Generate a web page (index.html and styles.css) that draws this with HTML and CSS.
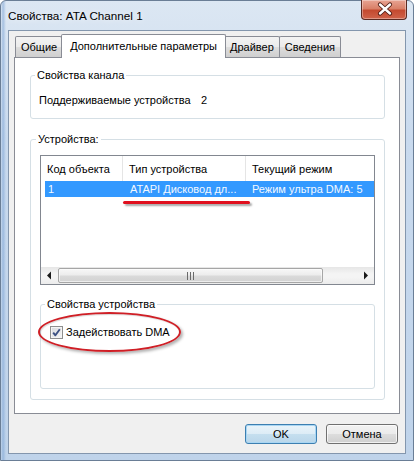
FILE: index.html
```html
<!DOCTYPE html>
<html lang="ru">
<head>
<meta charset="utf-8">
<title>Свойства: ATA Channel 1</title>
<link rel="stylesheet" href="styles.css">
</head>
<body>
<div class="window">
  <div class="titlebar">
    <span class="title">Свойства: ATA Channel 1</span>
    <div class="close">
      <svg width="46" height="20" viewBox="0 0 46 20">
        <path d="M18 5.5 L28 14.5 M28 5.5 L18 14.5" stroke="#4b1a12" stroke-width="4.2" stroke-linecap="round" fill="none"/>
        <path d="M18 5.5 L28 14.5 M28 5.5 L18 14.5" stroke="#ffffff" stroke-width="2.4" stroke-linecap="round" fill="none"/>
      </svg>
    </div>
  </div>
  <div class="client">
    <div class="tabs">
      <div class="tab first">Общие</div>
      <div class="tab active">Дополнительные параметры</div>
      <div class="tab">Драйвер</div>
      <div class="tab">Сведения</div>
    </div>
    <div class="panel">
      <fieldset class="group g1">
        <legend>Свойства канала</legend>
        <div class="prop"><span class="prop-label">Поддерживаемые устройства</span><span>2</span></div>
      </fieldset>
      <fieldset class="group g2">
        <legend>Устройства:</legend>
        <div class="list">
          <div class="lhead">
            <div class="h1">Код объекта</div>
            <div class="h2">Тип устройства</div>
            <div class="h3">Текущий режим</div>
          </div>
          <div class="lrow sel">
            <div class="r1">1</div>
            <div class="r2">ATAPI Дисковод дл...</div>
            <div class="r3">Режим ультра DMA: 5</div>
          </div>
          <div class="lbody"></div>
          <div class="hscroll">
            <div class="sbtn">
              <svg width="17" height="17" viewBox="0 0 17 17"><path d="M6 8.5 L10 4.5 L10 12.5 Z" fill="#1a1a1a"/></svg>
            </div>
            <div class="thumb">
              <svg width="7" height="8" viewBox="0 0 7 8"><path d="M0.5 0 V8 M3.5 0 V8 M6.5 0 V8" stroke="#6a6a6a" stroke-width="1"/></svg>
            </div>
            <div class="track"></div>
            <div class="sbtn">
              <svg width="17" height="17" viewBox="0 0 17 17"><path d="M11 8.5 L7 4.5 L7 12.5 Z" fill="#1a1a1a"/></svg>
            </div>
          </div>
        </div>
        <fieldset class="group g3">
          <legend>Свойства устройства</legend>
          <div class="check">
            <span class="box">
              <svg width="11" height="11" viewBox="0 0 11 11"><path d="M2.2 5.6 L4.4 8.3 L8.8 2.2" stroke="#3c5183" stroke-width="1.9" fill="none" stroke-linejoin="round"/></svg>
            </span>
            <span>Задействовать DMA</span>
          </div>
        </fieldset>
      </fieldset>
    </div>
    <div class="buttons">
      <button class="btn default">OK</button>
      <button class="btn">Отмена</button>
    </div>
  </div>
  <div class="mark underline"></div>
  <div class="mark ellipse"></div>
</div>
</body>
</html>
```
FILE: styles.css
```css
* { box-sizing: border-box; }
html, body { margin: 0; padding: 0; }
body {
  width: 414px;
  height: 461px;
  overflow: hidden;
  background: #ffffff;
  font-family: "Liberation Sans", Arial, sans-serif;
  font-size: 11px;
  line-height: 16px;
  color: #000;
  white-space: nowrap;
}

.window {
  position: relative;
  width: 414px;
  height: 461px;
  padding: 0 7px 6px;
  border: 1px solid #6a7e96;
  border-radius: 6px 6px 0 0;
  background:
    linear-gradient(to right, rgba(255,255,255,0) 0, rgba(120,160,210,.55) 2px, rgba(255,255,255,0) 5px, rgba(255,255,255,0) 100%),
    linear-gradient(#dce7f3, #c9daee 30%, #bfd3ea 100%);
}

.titlebar {
  display: flex;
  align-items: flex-start;
  height: 29px;
}
.title {
  margin-top: 7px;
  font-size: 11.7px;
  color: #000;
  text-shadow: 0 0 6px rgba(255,255,255,.9);
}
.close {
  margin-left: auto;
  margin-top: -1px;
  margin-right: -1px;
  width: 46px;
  height: 20px;
  border: 1px solid #5a2a22;
  border-top: none;
  border-radius: 0 0 4px 4px;
  background: linear-gradient(#e8a493 0, #d98068 45%, #c44a30 55%, #d0634a 100%);
  box-shadow: inset 0 0 0 1px rgba(255,255,255,.35);
}
.close svg { display: block; margin-top: -1px; }

.client {
  height: 424px;
  background: #f0f0f0;
  border: 1px solid #8396ad;
  padding: 0 5px;
}

.tabs {
  display: flex;
  align-items: flex-end;
  height: 27px;
  padding-top: 3px;
  margin-bottom: -1px;
  position: relative;
  z-index: 1;
}
.tab {
  height: 21px;
  margin-bottom: 1px;
  margin-left: -1px;
  padding: 0 5px;
  display: flex;
  align-items: center;
  border: 1px solid #898c95;
  border-bottom: none;
  border-radius: 2px 2px 0 0;
  background: linear-gradient(#f3f3f3 0, #ebebeb 50%, #dddddd 51%, #cfcfcf 100%);
}
.tab.first { margin-left: 1px; padding: 0 4px 0 5px; }
.tab.active {
  height: 24px;
  margin-bottom: 0;
  margin-left: -1px;
  margin-right: -1px;
  padding: 3px 8px 0;
  align-items: flex-start;
  background: #ffffff;
  position: relative;
  z-index: 2;
}

.panel {
  height: 357px;
  background: #ffffff;
  border: 1px solid #898c95;
  padding: 0 14px 0 15px;
}

.group {
  margin: 0;
  padding: 0 8px;
  border: 1px solid #d5dfe5;
  border-radius: 3px;
  min-width: 0;
}
.group legend {
  padding: 0 2px;
  margin-left: -4px;
  line-height: 16px;
}

.g1 { margin-top: 9px; }
.prop {
  display: flex;
  margin-top: 9px;
  padding-bottom: 10px;
}
.prop-label { width: 162px; }

.g2 {
  margin-top: 12px;
  padding: 0 9px 10px;
}

.list {
  margin-top: 8px;
  height: 130px;
  border: 1px solid #828790;
  background: #ffffff;
  display: flex;
  flex-direction: column;
}
.lhead {
  display: flex;
  height: 25px;
  flex: none;
}
.lhead > div {
  display: flex;
  align-items: center;
  padding-left: 6px;
  border-right: 1px solid #e5e5e5;
  overflow: hidden;
}
.h1 { width: 82px; }
.h2 { width: 123px; }
.h3 { flex: 1; border-right: none !important; }

.lrow {
  display: flex;
  height: 16px;
  margin-left: 4px;
  flex: none;
}
.lrow.sel { background: #3399ff; color: #f2f8ff; }
.r1 { width: 78px; padding-left: 3px; }
.r2 { width: 123px; padding-left: 7px; overflow: hidden; }
.r3 { flex: 1; padding-left: 6px; overflow: hidden; }

.lbody { flex: 1; }

.hscroll {
  display: flex;
  height: 17px;
  flex: none;
  background: linear-gradient(#e6e6e6, #f4f4f4 40%, #f4f4f4 60%, #ececec);
}
.sbtn { width: 17px; flex: none; }
.sbtn svg { display: block; }
.thumb {
  width: 265px;
  margin: 1px 0;
  border: 1px solid #a6a6a6;
  border-radius: 2px;
  background: linear-gradient(#f7f7f7 0, #ededed 45%, #dadada 55%, #d2d2d2 100%);
  display: flex;
  align-items: center;
  justify-content: center;
  box-shadow: inset 0 0 0 1px rgba(255,255,255,.6);
}
.thumb svg { display: block; }
.track { flex: 1; }

.g3 {
  margin-top: 11px;
  height: 93px;
  padding: 0 8px;
}
.check {
  display: flex;
  align-items: center;
  margin-top: 12px;
  margin-left: 1px;
  height: 16px;
}
.box {
  width: 13px;
  height: 13px;
  border: 1px solid #8e8f8f;
  background: linear-gradient(135deg, #d6d8dc, #f6f6f6);
  box-shadow: inset 0 0 0 1px #f4f4f4;
  margin-right: 3px;
  display: flex;
  align-items: center;
  justify-content: center;
}
.box svg { display: block; }

.buttons {
  display: flex;
  justify-content: flex-end;
  gap: 9px;
  margin-top: 10px;
  padding-right: 2px;
}
.btn {
  width: 72px;
  height: 20px;
  padding: 0;
  font: inherit;
  color: #000;
  border: 1px solid #707070;
  border-radius: 3px;
  background: linear-gradient(#f2f2f2 0, #ebebeb 50%, #dddddd 51%, #cfcfcf 100%);
  box-shadow: inset 0 0 0 1px rgba(255,255,255,.7);
}
.btn.default {
  border-color: #3c7fb1;
  background: linear-gradient(#eaf4fa 0, #dcecf6 50%, #c5dfef 51%, #b9d6ea 100%);
  box-shadow: inset 0 0 0 1px #a9d6f3;
}

.mark { position: absolute; }
.underline {
  left: 122px;
  top: 200px;
  width: 127px;
  height: 3px;
  background: #e0101e;
  border-radius: 2px;
  box-shadow: 2px 2px 2px rgba(0,0,0,.35);
}
.ellipse {
  left: 37px;
  top: 311px;
  width: 143px;
  height: 40px;
  border: 2.5px solid #cf1f26;
  border-radius: 50%;
  box-shadow: 2px 2px 3px rgba(0,0,0,.3), inset 1px 1px 1px rgba(0,0,0,.15);
}
```
